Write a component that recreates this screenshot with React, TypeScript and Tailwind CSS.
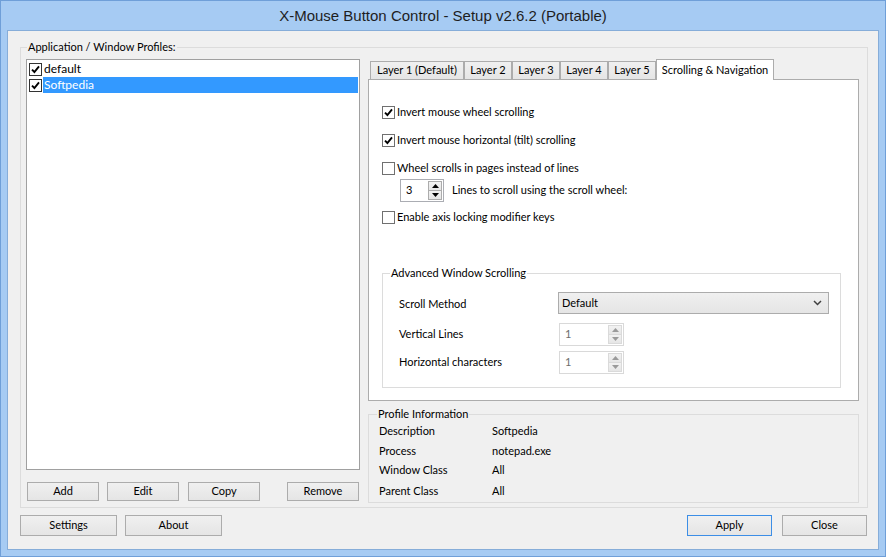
import type { ReactNode } from 'react'

// Windows 8 style dialog: X-Mouse Button Control setup

function CheckBox({ checked, dark }: { checked?: boolean; dark?: boolean }) {
  return (
    <span
      className={`flex h-[13px] w-[13px] shrink-0 items-center justify-center border bg-white ${dark ? 'border-[#333333]' : 'border-[#707070]'}`}
    >
      {checked && (
        <svg width="9" height="9" viewBox="0 0 9 9">
          <path d="M1 4.6 L3.4 7 L8 1.4" stroke="#000" strokeWidth="1.9" fill="none" />
        </svg>
      )}
    </span>
  )
}

function Button({ children, className = '', primary }: { children: ReactNode; className?: string; primary?: boolean }) {
  return (
    <button
      className={`flex shrink-0 items-center justify-center border bg-linear-to-b from-[#f0f0f0] to-[#e5e5e5] text-black ${primary ? 'border-[#3c8ee6]' : 'border-[#acacac]'} ${className}`}
    >
      {children}
    </button>
  )
}

function Arrow({ up, light }: { up?: boolean; light?: boolean }) {
  return (
    <svg width="7" height="4" viewBox="0 0 7 4">
      <path d={up ? 'M0 4 L3.5 0 L7 4 Z' : 'M0 0 L3.5 4 L7 0 Z'} fill={light ? '#9a9a9a' : '#000'} />
    </svg>
  )
}

function Spinner({ value, disabled, className = '' }: { value: string; disabled?: boolean; className?: string }) {
  const half = `flex flex-1 items-center justify-center border bg-linear-to-b from-[#f2f2f2] to-[#e6e6e6] ${disabled ? 'border-[#dadada]' : 'border-[#acacac]'}`
  return (
    <div className={`flex h-[23px] border bg-white ${disabled ? 'border-[#d9d9d9]' : 'border-[#abadb3]'} ${className}`}>
      <span className={`flex-1 pl-[5px] leading-[20px] ${disabled ? 'text-[#6d6d6d]' : 'text-black'}`}>{value}</span>
      <div className="flex w-[15px] flex-col py-px pr-px">
        <span className={half}>
          <Arrow up light={disabled} />
        </span>
        <span className={`${half} -mt-px`}>
          <Arrow light={disabled} />
        </span>
      </div>
    </div>
  )
}

const tabs = ['Layer 1 (Default)', 'Layer 2', 'Layer 3', 'Layer 4', 'Layer 5']

export default function App() {
  return (
    <div className="flex h-[557px] w-[886px] flex-col border border-[#6f9fd8] bg-[#a6cbf3] font-[family-name:Lato,Liberation_Sans,Arial,sans-serif] text-[11px] text-black">
      <div className="flex h-[29px] items-center justify-center pt-[2px] font-[family-name:Liberation_Sans,Arial,sans-serif] text-[15px] text-[#1e1e1e]">
        X-Mouse Button Control - Setup v2.6.2 (Portable)
      </div>

      <div className="mx-[6px] flex h-[520px] flex-col border border-[#86add9] bg-[#f0f0f0] pr-[10px] pl-[12px] pt-[9px]">
        {/* Main group */}
        <fieldset className="border border-[#dcdcdc] pt-[5px] pr-[8px] pb-[4px] pl-[5px]">
          <legend className="ml-[1px] px-[1px] leading-[14px]">Application / Window Profiles:</legend>
          <div className="flex items-start gap-[8px]">
            {/* Profiles */}
            <div className="flex w-[334px] flex-col">
              <div className="h-[411px] border border-[#a0a0a0] bg-white pt-px pl-[2px] pr-px">
                <div className="flex h-[16px] items-center">
                  <CheckBox checked dark />
                  <span className="ml-px pl-px text-[12px]">default</span>
                </div>
                <div className="flex h-[16px] items-center">
                  <CheckBox checked dark />
                  <span className="ml-px flex h-full flex-1 items-center bg-[#3399ff] pl-px text-[12px] text-white">Softpedia</span>
                </div>
              </div>
              <div className="mt-[12px] flex">
                <Button className="ml-px h-[19px] w-[72px]">Add</Button>
                <Button className="ml-[8px] h-[19px] w-[72px]">Edit</Button>
                <Button className="ml-[9px] h-[19px] w-[72px]">Copy</Button>
                <Button className="ml-[27px] h-[19px] w-[72px]">Remove</Button>
              </div>
            </div>

            {/* Tabs + info */}
            <div className="flex w-[491px] flex-col">
              <div className="flex h-[20px] items-end pl-[2px]">
                {tabs.map((t) => (
                  <div
                    key={t}
                    className={`flex h-[18px] items-center justify-center border border-b-0 border-[#acacac] bg-linear-to-b from-[#f0f0f0] to-[#e5e5e5] ${t === tabs[0] ? 'w-[94px]' : 'w-[48px]'}`}
                  >
                    {t}
                  </div>
                ))}
                <div className="relative z-10 -mb-px flex h-[21px] w-[118px] items-start justify-center border border-b-0 border-[#acacac] bg-white pt-[2px] whitespace-nowrap">
                  Scrolling &amp; Navigation
                </div>
              </div>

              <div className="flex h-[322px] flex-col border border-[#acacac] bg-white pl-[13px] pt-[22px]">
                <label className="flex h-[20px] items-center">
                  <CheckBox checked />
                  <span className="ml-[2px]">Invert mouse wheel scrolling</span>
                </label>
                <label className="mt-[8px] flex h-[20px] items-center">
                  <CheckBox checked />
                  <span className="ml-[2px]">Invert mouse horizontal (tilt) scrolling</span>
                </label>
                <label className="mt-[8px] flex h-[20px] items-center">
                  <CheckBox />
                  <span className="ml-[2px]">Wheel scrolls in pages instead of lines</span>
                </label>
                <div className="mt-px flex items-center pl-[18px]">
                  <Spinner value="3" className="w-[44px]" />
                  <span className="ml-[8px]">Lines to scroll using the scroll wheel:</span>
                </div>
                <label className="mt-[5px] flex h-[20px] items-center">
                  <CheckBox />
                  <span className="ml-[2px]">Enable axis locking modifier keys</span>
                </label>

                <fieldset className="mt-[39px] w-[459px] border border-[#dcdcdc] pt-[12px] pb-[13px] pl-[16px]">
                  <legend className="-ml-[9px] px-[1px] leading-[14px]">Advanced Window Scrolling</legend>
                  <div className="flex h-[22px] items-center">
                    <span className="w-[159px] pt-[2px]">Scroll Method</span>
                    <div className="flex h-[22px] w-[271px] items-center justify-between border border-[#acacac] bg-linear-to-b from-[#f0f0f0] to-[#e5e5e5] pr-[6px] pl-[3px]">
                      <span>Default</span>
                      <svg width="9" height="6" viewBox="0 0 9 6">
                        <path d="M1 1 L4.5 4.5 L8 1" stroke="#404040" strokeWidth="1.5" fill="none" />
                      </svg>
                    </div>
                  </div>
                  <div className="mt-[9px] flex items-center">
                    <span className="w-[160px]">Vertical Lines</span>
                    <Spinner value="1" disabled className="w-[65px]" />
                  </div>
                  <div className="mt-[5px] flex items-center">
                    <span className="w-[160px]">Horizontal characters</span>
                    <Spinner value="1" disabled className="w-[65px]" />
                  </div>
                </fieldset>
              </div>

              <fieldset className="mt-[6px] border border-[#dcdcdc] pt-[2px] pb-[3px] pl-[10px]">
                <legend className="-ml-[2px] px-px leading-[14px]">Profile Information</legend>
                {[
                  ['Description', 'Softpedia', ''],
                  ['Process', 'notepad.exe', 'mt-[4px]'],
                  ['Window Class', 'All', 'mt-[3px]'],
                  ['Parent Class', 'All', 'mt-[5px]'],
                ].map(([k, v, m]) => (
                  <div key={k} className={`flex h-[16px] items-center ${m}`}>
                    <span className="w-[113px]">{k}</span>
                    <span>{v}</span>
                  </div>
                ))}
              </fieldset>
            </div>
          </div>
        </fieldset>

        <div className="mt-[7px] flex items-center">
          <Button className="h-[21px] w-[97px]">Settings</Button>
          <Button className="ml-[8px] h-[21px] w-[97px]">About</Button>
          <div className="flex-1" />
          <Button primary className="h-[21px] w-[85px]">Apply</Button>
          <Button className="mr-px ml-[10px] h-[21px] w-[85px]">Close</Button>
        </div>
      </div>
    </div>
  )
}
